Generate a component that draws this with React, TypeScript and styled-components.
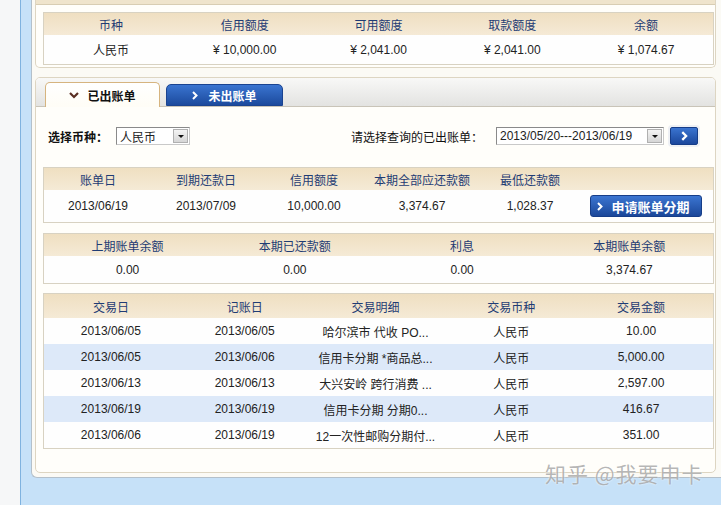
import React from "react";
import styled, { createGlobalStyle } from "styled-components";

const GlobalStyle = createGlobalStyle`
  *, *::before, *::after { box-sizing: border-box; }
  html, body { margin: 0; padding: 0; }
  body {
    font-family: "Liberation Sans", "Noto Sans CJK SC", sans-serif;
    font-size: 12px;
    color: #222;
    overflow: hidden;
  }
`;

const Page = styled.div`
  position: relative;
  display: flex;
  width: 721px;
  height: 505px;
  overflow: hidden;
`;

const LeftRail = styled.div`
  width: 21px;
  flex: none;
  background: #f6f7f8;
  border-right: 1px solid #7fb2df;
`;

const Main = styled.div`
  flex: 1;
  background: #c6e1f8;
`;

const Frame = styled.div`
  margin-left: 10px;
  height: 478px;
  padding: 0 5px 0 3px;
  background: #fbfaf5;
  border-left: 1px solid #b4c0ca;
  border-bottom: 1px solid #b4c0ca;
  border-bottom-left-radius: 6px;
  display: flex;
  flex-direction: column;
  gap: 9px;
`;

const Panel = styled.div<{ $h: number; $cut?: boolean }>`
  height: ${(p) => p.$h}px;
  flex: none;
  background: #fffefa;
  border: 1px solid #ddd5c2;
  border-top: ${(p) => (p.$cut ? "none" : "1px solid #ddd5c2")};
  border-radius: ${(p) => (p.$cut ? "0 0 5px 5px" : "5px")};
  display: flex;
  flex-direction: column;
  overflow: hidden;
`;

const Cap = styled.div`
  height: 5px;
  background: #efe4cc;
  border-bottom: 1px solid #d8cdb3;
`;

const TabStrip = styled.div`
  height: 29px;
  flex: none;
  display: flex;
  align-items: flex-end;
  gap: 6px;
  padding-left: 9px;
  background: linear-gradient(#f8f8f7, #e3e3e1);
  border-bottom: 1px solid #c9c4b8;
`;

const Tab = styled.div<{ $active?: boolean }>`
  display: flex;
  align-items: center;
  justify-content: center;
  gap: ${(p) => (p.$active ? 8 : 10)}px;
  width: ${(p) => (p.$active ? 115 : 117)}px;
  height: ${(p) => (p.$active ? 25 : 22)}px;
  margin-bottom: ${(p) => (p.$active ? -1 : 0)}px;
  position: relative;
  border-radius: 5px 5px 0 0;
  font-weight: bold;
  font-size: 12px;
  color: ${(p) => (p.$active ? "#111" : "#fff")};
  background: ${(p) =>
    p.$active
      ? "linear-gradient(#ffffff, #fffdf6)"
      : "linear-gradient(#3a74d0, #1c4a9d)"};
  border: 1px solid ${(p) => (p.$active ? "#d6b47f" : "#1a4390")};
  border-bottom: ${(p) => (p.$active ? "none" : "1px solid #1a4390")};
`;

const FilterRow = styled.div`
  display: flex;
  align-items: center;
  justify-content: space-between;
  height: 18px;
  margin-top: 20px;
  padding: 0 17px 0 12px;
`;

const Group = styled.div<{ $gap: number }>`
  display: flex;
  align-items: center;
  gap: ${(p) => p.$gap}px;
`;

const Label = styled.span<{ $bold?: boolean; $mr?: number }>`
  font-weight: ${(p) => (p.$bold ? "bold" : "normal")};
  margin-right: ${(p) => p.$mr || 0}px;
  color: #111;
  white-space: nowrap;
`;

const Select = styled.div<{ $w: number }>`
  display: flex;
  align-items: center;
  width: ${(p) => p.$w}px;
  height: 18px;
  padding: 0 1px 0 3px;
  background: #fff;
  border: 1px solid #8a8a8a;
  border-right-color: #c9c9c9;
  border-bottom-color: #c9c9c9;
  color: #222;
`;

const SelectText = styled.span`
  flex: 1;
  white-space: nowrap;
`;

const DropBtn = styled.span`
  width: 15px;
  height: 14px;
  display: flex;
  align-items: center;
  justify-content: center;
  background: linear-gradient(#f4f4f4, #d6d6d6);
  border: 1px solid #b0b0b0;
  &::after {
    content: "";
    border-left: 3px solid transparent;
    border-right: 3px solid transparent;
    border-top: 3px solid #111;
  }
`;

const GoBtn = styled.div`
  width: 28px;
  height: 18px;
  display: flex;
  align-items: center;
  justify-content: center;
  background: linear-gradient(#3a74d0, #1b479c);
  border: 1px solid #163d88;
  border-radius: 2px;
  box-shadow: 0 0 0 2px #eef0f4;
`;

const Table = styled.div<{ $mt: number }>`
  margin: ${(p) => p.$mt}px 1px 0 7px;
  border: 1px solid #d8d2c2;
  flex: none;
`;

const Row = styled.div<{ $cols: string; $h: number; $tone?: "head" | "blue" | "white" }>`
  display: grid;
  grid-template-columns: ${(p) => p.$cols};
  align-items: center;
  height: ${(p) => p.$h}px;
  background: ${(p) =>
    p.$tone === "head"
      ? "linear-gradient(#efdfc1, #f5ead6)"
      : p.$tone === "blue"
      ? "#dde9f9"
      : "#fefefe"};
  color: ${(p) => (p.$tone === "head" ? "#1f3c74" : "#222")};
`;

const Cell = styled.div<{ $shift?: number }>`
  text-align: center;
  white-space: nowrap;
  overflow: hidden;
  padding-right: ${(p) => p.$shift || 0}px;
`;

const ApplyBtn = styled.div`
  justify-self: center;
  margin-left: -6px;
  width: 112px;
  height: 22px;
  display: flex;
  align-items: center;
  gap: 9px;
  padding-left: 6px;
  color: #fff;
  font-weight: bold;
  font-size: 13px;
  background: linear-gradient(#3b75d1, #1b4799);
  border: 1px solid #163d88;
  border-radius: 3px;
`;

const Watermark = styled.div`
  position: absolute;
  left: 545px;
  top: 458px;
  font-family: "Noto Sans CJK SC", sans-serif;
  font-size: 21px;
  letter-spacing: 1px;
  color: rgba(150, 150, 150, 0.7);
  text-shadow: 0 0 2px #fff;
`;

const ChevronRight = ({ size = 8 }: { size?: number }) => (
  <svg width={size - 2} height={size + 1} viewBox="0 0 6 9">
    <polyline points="1,1 4.5,4.5 1,8" fill="none" stroke="#fff" strokeWidth="2" />
  </svg>
);

const ChevronDown = () => (
  <svg width="10" height="7" viewBox="0 0 10 7">
    <polyline points="1,1 5,5 9,1" fill="none" stroke="#5a2e22" strokeWidth="2.2" />
  </svg>
);

const summaryHead = ["币种", "信用额度", "可用额度", "取款额度", "余额"];
const summaryData = ["人民币", "¥ 10,000.00", "¥ 2,041.00", "¥ 2,041.00", "¥ 1,074.67"];

const billHead = ["账单日", "到期还款日", "信用额度", "本期全部应还款额", "最低还款额", ""];
const billData = ["2013/06/19", "2013/07/09", "10,000.00", "3,374.67", "1,028.37"];

const balHead = ["上期账单余额", "本期已还款额", "利息", "本期账单余额"];
const balData = ["0.00", "0.00", "0.00", "3,374.67"];

const txHead = ["交易日", "记账日", "交易明细", "交易币种", "交易金额"];
const txRows = [
  ["2013/06/05", "2013/06/05", "哈尔滨市 代收 PO...", "人民币", "10.00"],
  ["2013/06/05", "2013/06/06", "信用卡分期 *商品总...", "人民币", "5,000.00"],
  ["2013/06/13", "2013/06/13", "大兴安岭 跨行消费 ...", "人民币", "2,597.00"],
  ["2013/06/19", "2013/06/19", "信用卡分期 分期0...", "人民币", "416.67"],
  ["2013/06/06", "2013/06/19", "12一次性邮购分期付...", "人民币", "351.00"],
];
// small offsets per column so the transaction columns sit where the reference has them
const txShift = [0, 0, 6, 2, 10];

const FIVE = "repeat(5, 1fr)";
const BILL = "repeat(5, 108px) 1fr";
const FOUR = "repeat(4, 1fr)";

export default function App() {
  return (
    <Page>
      <GlobalStyle />
      <LeftRail />
      <Main>
        <Frame>
          <Panel $h={68} $cut>
            <Cap />
            <Table $mt={7}>
              <Row $cols={FIVE} $h={22} $tone="head">
                {summaryHead.map((h) => (
                  <Cell key={h}>{h}</Cell>
                ))}
              </Row>
              <Row $cols={FIVE} $h={29}>
                {summaryData.map((d, i) => (
                  <Cell key={i}>{d}</Cell>
                ))}
              </Row>
            </Table>
          </Panel>

          <Panel $h={396}>
            <TabStrip>
              <Tab $active>
                <ChevronDown />
                已出账单
              </Tab>
              <Tab>
                <ChevronRight />
                未出账单
              </Tab>
            </TabStrip>

            <FilterRow>
              <Group $gap={8}>
                <Label $bold>选择币种：</Label>
                <Select $w={74}>
                  <SelectText>人民币</SelectText>
                  <DropBtn />
                </Select>
              </Group>
              <Group $gap={6}>
                <Label $mr={7}>请选择查询的已出账单：</Label>
                <Select $w={168}>
                  <SelectText>2013/05/20---2013/06/19</SelectText>
                  <DropBtn />
                </Select>
                <GoBtn>
                  <ChevronRight size={9} />
                </GoBtn>
              </Group>
            </FilterRow>

            <Table $mt={22}>
              <Row $cols={BILL} $h={22} $tone="head">
                {billHead.map((h, i) => (
                  <Cell key={i}>{h}</Cell>
                ))}
              </Row>
              <Row $cols={BILL} $h={32}>
                {billData.map((d, i) => (
                  <Cell key={i}>{d}</Cell>
                ))}
                <ApplyBtn>
                  <ChevronRight />
                  申请账单分期
                </ApplyBtn>
              </Row>
            </Table>

            <Table $mt={10}>
              <Row $cols={FOUR} $h={22} $tone="head">
                {balHead.map((h) => (
                  <Cell key={h}>{h}</Cell>
                ))}
              </Row>
              <Row $cols={FOUR} $h={27}>
                {balData.map((d, i) => (
                  <Cell key={i}>{d}</Cell>
                ))}
              </Row>
            </Table>

            <Table $mt={9}>
              <Row $cols={FIVE} $h={24} $tone="head">
                {txHead.map((h, j) => (
                  <Cell key={h} $shift={txShift[j]}>{h}</Cell>
                ))}
              </Row>
              {txRows.map((r, i) => (
                <Row key={i} $cols={FIVE} $h={26} $tone={i % 2 ? "blue" : "white"}>
                  {r.map((c, j) => (
                    <Cell key={j} $shift={txShift[j]}>{c}</Cell>
                  ))}
                </Row>
              ))}
            </Table>
          </Panel>
        </Frame>
      </Main>
      <Watermark>知乎 @我要申卡</Watermark>
    </Page>
  );
}
